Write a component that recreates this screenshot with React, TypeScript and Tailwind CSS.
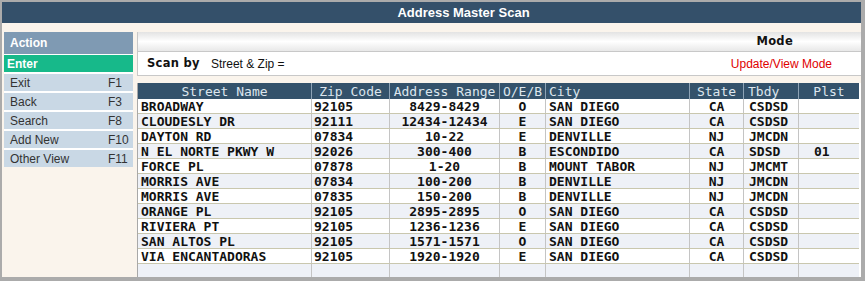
import React from 'react';

type Col = { h: string; w: string; ha: string; da: string };

const cols: Col[] = [
  { h: 'Street Name', w: 'w-[173px]', ha: 'justify-center', da: 'justify-start pl-[3px]' },
  { h: 'Zip Code', w: 'w-[78px]', ha: 'justify-center', da: 'justify-start pl-[2px]' },
  { h: 'Address Range', w: 'w-[110px]', ha: 'justify-center', da: 'justify-center' },
  { h: 'O/E/B', w: 'w-[46px]', ha: 'justify-center', da: 'justify-center' },
  { h: 'City', w: 'w-[144px]', ha: 'justify-start pl-[3px]', da: 'justify-start pl-[3px]' },
  { h: 'State', w: 'w-[54px]', ha: 'justify-center', da: 'justify-center' },
  { h: 'Tbdy', w: 'w-[55px]', ha: 'justify-start pl-[4px]', da: 'justify-start pl-[5px]' },
  { h: 'Plst', w: 'w-[61px]', ha: 'justify-center', da: 'justify-start pl-[15px]' },
];

const rows: string[][] = [
  ['BROADWAY', '92105', '8429-8429', 'O', 'SAN DIEGO', 'CA', 'CSDSD', ''],
  ['CLOUDESLY DR', '92111', '12434-12434', 'E', 'SAN DIEGO', 'CA', 'CSDSD', ''],
  ['DAYTON RD', '07834', '10-22', 'E', 'DENVILLE', 'NJ', 'JMCDN', ''],
  ['N EL NORTE PKWY W', '92026', '300-400', 'B', 'ESCONDIDO', 'CA', 'SDSD', '01'],
  ['FORCE PL', '07878', '1-20', 'B', 'MOUNT TABOR', 'NJ', 'JMCMT', ''],
  ['MORRIS AVE', '07834', '100-200', 'B', 'DENVILLE', 'NJ', 'JMCDN', ''],
  ['MORRIS AVE', '07835', '150-200', 'B', 'DENVILLE', 'NJ', 'JMCDN', ''],
  ['ORANGE PL', '92105', '2895-2895', 'O', 'SAN DIEGO', 'CA', 'CSDSD', ''],
  ['RIVIERA PT', '92105', '1236-1236', 'E', 'SAN DIEGO', 'CA', 'CSDSD', ''],
  ['SAN ALTOS PL', '92105', '1571-1571', 'O', 'SAN DIEGO', 'CA', 'CSDSD', ''],
  ['VIA ENCANTADORAS', '92105', '1920-1920', 'E', 'SAN DIEGO', 'CA', 'CSDSD', ''],
  ['', '', '', '', '', '', '', ''],
];

const actions: [string, string][] = [
  ['Exit', 'F1'],
  ['Back', 'F3'],
  ['Search', 'F8'],
  ['Add New', 'F10'],
  ['Other View', 'F11'],
];

export default function App() {
  return (
    <div className="w-[865px] h-[281px] overflow-hidden bg-[#ababab] pl-[2px] pt-[2px] pr-[4px] pb-[4px] font-['Liberation_Sans',Arial,sans-serif]">
      <div className="w-[859px] h-[275px] bg-[#faf4ec] flex flex-col overflow-hidden">
        {/* Title bar */}
        <div className="h-[21px] shrink-0 bg-[#34506a] flex items-center justify-center pl-[64px] text-white font-bold text-[13px]">
          Address Master Scan
        </div>
        <div className="flex mt-[9px] h-[245px]">
          {/* Sidebar */}
          <div className="ml-[2px] w-[129px] shrink-0 flex flex-col">
            <div className="flex flex-col gap-[2px] bg-white">
              <div className="h-[22px] bg-[#7f9ab3] text-white font-bold text-[12px] flex items-center pl-[6px]">
                Action
              </div>
              <div className="-mt-px h-[17px] bg-[#17b98a] text-white font-bold text-[12px] flex items-center pl-[3px]">
                Enter
              </div>
              {actions.map(([label, key]) => (
                <div key={label} className="h-[17px] bg-[#c9d8e5] text-[#333] text-[12px] flex items-center pl-[6px]">
                  <span className="w-[98px]">{label}</span>
                  <span>{key}</span>
                </div>
              ))}
            </div>
          </div>
          {/* Right panel */}
          <div className="ml-[4px] w-[724px] shrink-0 flex flex-col">
            <div className="h-[20px] shrink-0 border-l border-[#c8c8c8] bg-gradient-to-b from-[#e3e3e3] via-white to-[#e8e8e8] flex items-center justify-end pr-[68px] border-b">
              <span className="font-bold text-[11.5px] text-[#111] font-['DejaVu_Sans',Verdana,sans-serif] tracking-[0.3px]">Mode</span>
            </div>
            <div className="h-[24px] shrink-0 bg-white border-l border-b border-[#c8c8c8] flex items-center">
              <span className="ml-[9px] font-bold text-[11.5px] text-[#111] font-['DejaVu_Sans',Verdana,sans-serif] tracking-[0.3px]">Scan by</span>
              <span className="ml-[11px] text-[12px] text-[#111]">Street &amp; Zip =</span>
              <span className="ml-auto mr-[29px] text-[12px] text-[#e00000]">Update/View Mode</span>
            </div>
            <div className="h-[7px] shrink-0" />
            <div className="flex-1 border-l border-[#a8a8a8] bg-white overflow-hidden font-['DejaVu_Sans_Mono',monospace] text-[13px] leading-none">
              <div className="flex h-[16px] w-[721px] bg-[#34526b] text-[#dde6ee]">
                {cols.map((c, i) => (
                  <div
                    key={c.h}
                    className={`${c.w} ${c.ha} shrink-0 flex items-center whitespace-pre ${i > 0 ? 'border-l border-[#8ea3b6]' : ''}`}
                  >
                    {c.h}
                  </div>
                ))}
              </div>
              {rows.map((r, ri) => (
                <div
                  key={ri}
                  className={`flex h-[15px] w-[721px] border-b border-[#c9c7ae] ${ri % 2 === 1 ? 'bg-[#eef1f7]' : 'bg-white'}`}
                >
                  {cols.map((c, i) => (
                    <div
                      key={i}
                      className={`${c.w} ${c.da} shrink-0 flex items-center whitespace-pre overflow-hidden font-bold text-[#111] ${i > 0 ? 'border-l border-[#c4c4c4]' : ''}`}
                    >
                      {r[i]}
                    </div>
                  ))}
                </div>
              ))}
            </div>
          </div>
        </div>
      </div>
    </div>
  );
}
